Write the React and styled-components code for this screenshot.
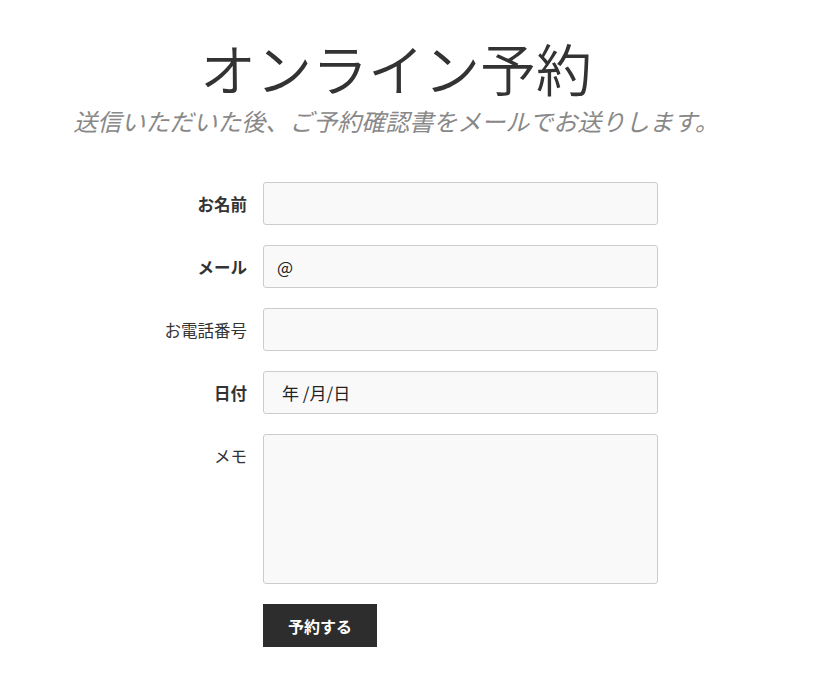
import React from 'react';
import styled, { createGlobalStyle } from 'styled-components';

const GlobalStyle = createGlobalStyle`
  body {
    margin: 0;
    background: #fff;
    font-family: "Noto Sans CJK JP", "Noto Sans", sans-serif;
    color: #333;
  }
`;

const Page = styled.div`
  width: 818px;
  height: 684px;
  overflow: hidden;
`;

const Header = styled.header`
  display: flex;
  flex-direction: column;
  align-items: center;
  padding: 33px 26px 0 0;
`;

const Title = styled.h1`
  margin: 0;
  font-size: 56px;
  font-weight: 350;
  line-height: 1.2;
  color: #333;
`;

const Subtitle = styled.p`
  margin: 5px 0 0;
  font-size: 24px;
  font-style: italic;
  line-height: 1.3;
  color: #888;
`;

const Form = styled.form`
  display: grid;
  grid-template-columns: 100px 395px;
  column-gap: 16px;
  row-gap: 20px;
  padding: 46px 0 0 147px;
`;

const Label = styled.label`
  display: flex;
  justify-content: flex-end;
  align-items: ${p => (p.$top ? 'flex-start' : 'center')};
  padding-top: ${p => (p.$top ? '10px' : '0')};
  font-size: 16.5px;
  font-weight: ${p => (p.$bold ? 700 : 400)};
  color: #333;
  white-space: nowrap;
`;

const Field = styled.div`
  box-sizing: border-box;
  height: ${p => p.$h || 43}px;
  background: #f9f9f9;
  border: 1px solid #ccc;
  border-radius: 3px;
  display: flex;
  align-items: center;
  padding-left: ${p => p.$pad || 13}px;
  font-family: "Noto Sans CJK JP", "Noto Sans", sans-serif;
  font-size: 17px;
  color: #222;
`;

const Button = styled.button`
  grid-column: 2;
  justify-self: start;
  width: 114px;
  height: 43px;
  border: none;
  border-radius: 0;
  background: #2d2d2d;
  color: #fff;
  font-family: "Noto Sans CJK JP", sans-serif;
  font-size: 16px;
  font-weight: 700;
`;

const rows = [
  { label: 'お名前', bold: true },
  { label: 'メール', bold: true, value: '@' },
  { label: 'お電話番号' },
  { label: '日付', bold: true, value: '年 /月/日', pad: 18 },
];

export default function App() {
  return (
    <Page>
      <GlobalStyle />
      <Header>
        <Title>オンライン予約</Title>
        <Subtitle>送信いただいた後、ご予約確認書をメールでお送りします。</Subtitle>
      </Header>
      <Form onSubmit={e => e.preventDefault()}>
        {rows.map(r => (
          <React.Fragment key={r.label}>
            <Label $bold={r.bold}>{r.label}</Label>
            <Field $pad={r.pad}>{r.value}</Field>
          </React.Fragment>
        ))}
        <Label $top>メモ</Label>
        <Field $h={150} />
        <Button type="submit">予約する</Button>
      </Form>
    </Page>
  );
}
